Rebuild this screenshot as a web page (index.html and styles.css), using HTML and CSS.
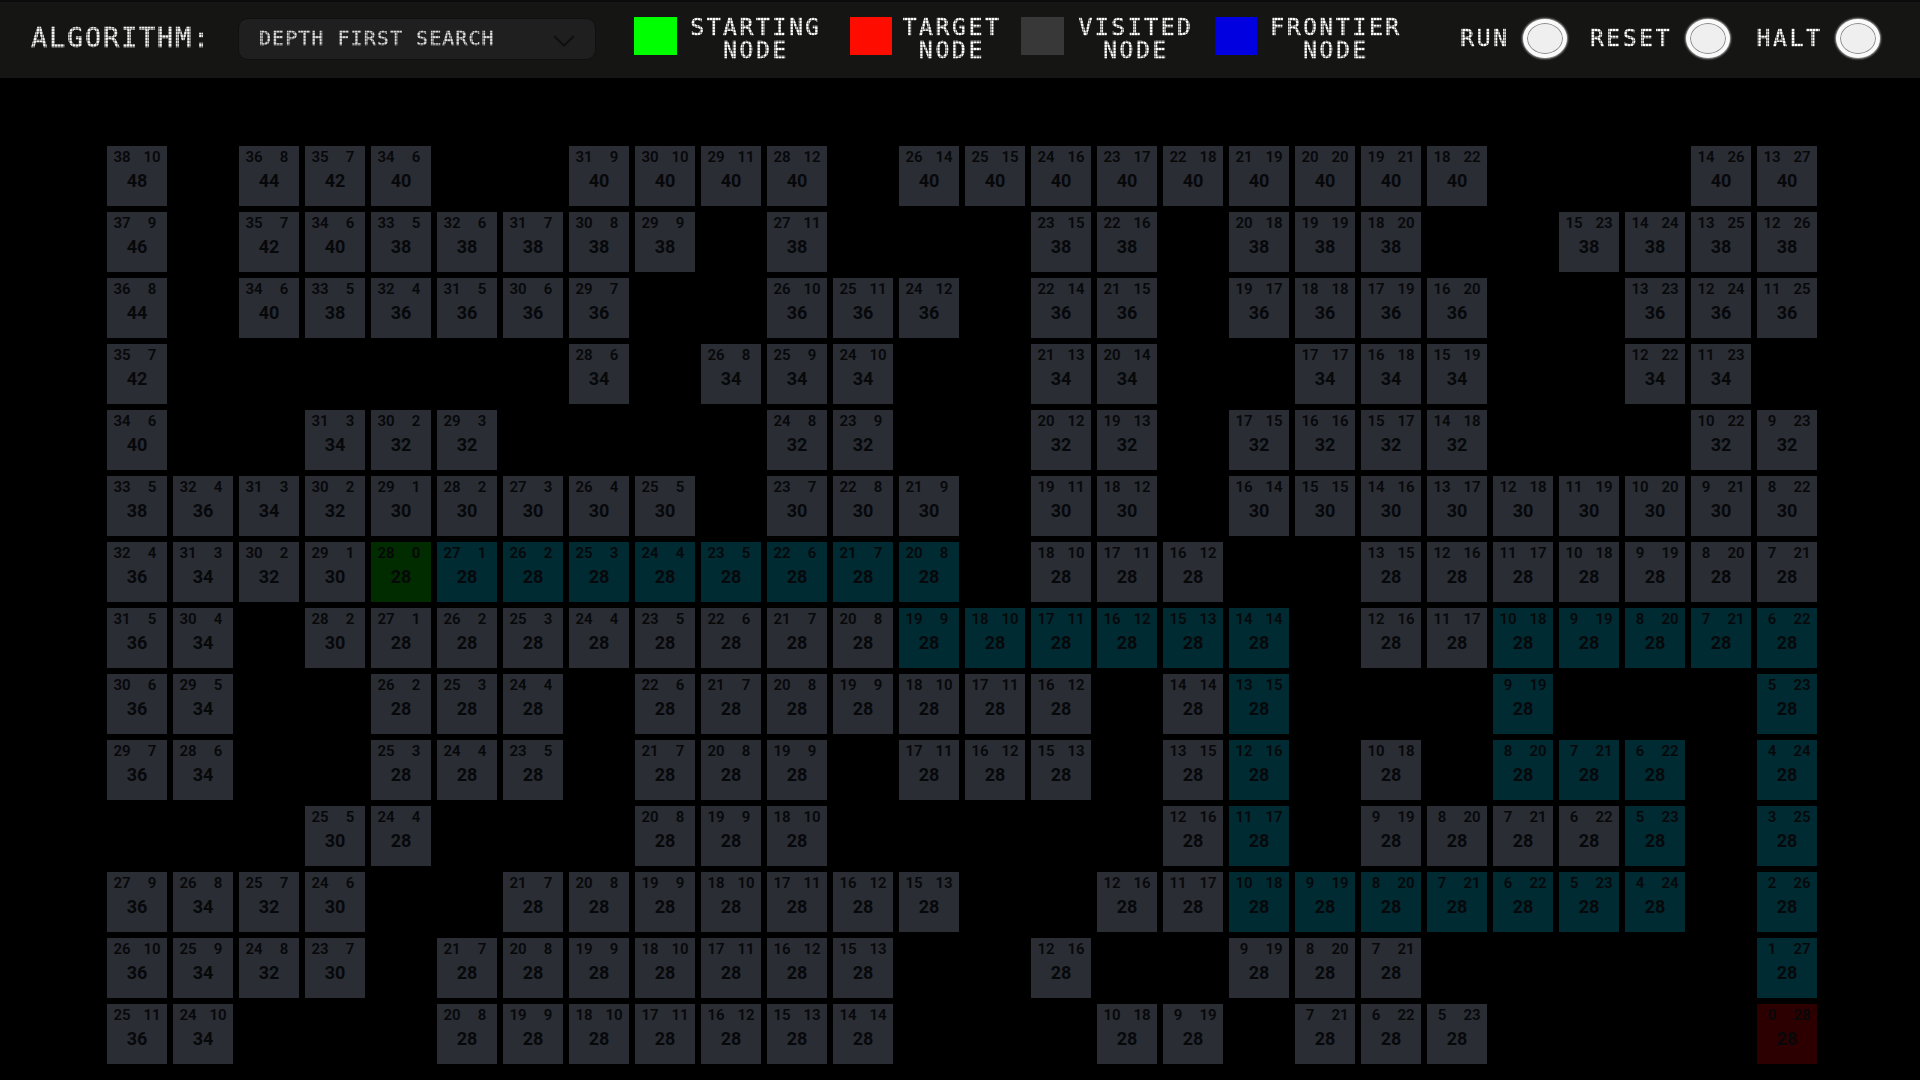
FILE: index.html
```html
<!DOCTYPE html>
<html lang="en">
<head>
<meta charset="utf-8">
<title>Pathfinding Visualizer</title>
<link rel="stylesheet" href="styles.css">
</head>
<body>
<header class="toolbar">
  <span class="title dotted">ALGORITHM:</span>
  <div class="select">
    <span class="select-text dotted">DEPTH FIRST SEARCH</span>
    <svg class="chevron" width="22" height="12" viewBox="0 0 22 12"><path d="M1 1 L11 10.5 L21 1" fill="none" stroke="#0f0f0f" stroke-width="2"/></svg>
  </div>
  <div class="legend">
    <span class="swatch swatch-start"></span>
    <span class="legend-label label-start dotted">STARTING<br>NODE</span>
    <span class="swatch swatch-target"></span>
    <span class="legend-label label-target dotted">TARGET<br>NODE</span>
    <span class="swatch swatch-visited"></span>
    <span class="legend-label label-visited dotted">VISITED<br>NODE</span>
    <span class="swatch swatch-frontier"></span>
    <span class="legend-label label-frontier dotted">FRONTIER<br>NODE</span>
  </div>
  <div class="controls">
    <span class="control-label label-run dotted">RUN</span><span class="knob knob-run"></span>
    <span class="control-label label-reset dotted">RESET</span><span class="knob knob-reset"></span>
    <span class="control-label label-halt dotted">HALT</span><span class="knob knob-halt"></span>
  </div>
</header>
<main class="board">
  <div class="grid" id="grid"></div>
</main>
<script src="app.js"></script>
</body>
</html>
```
FILE: styles.css
```css
* { box-sizing: border-box; }
html, body { margin: 0; height: 100%; background: #000; overflow: hidden; }
body { font-family: Roboto, "Liberation Sans", sans-serif; }

.toolbar {
  height: 78px;
  display: flex;
  align-items: flex-start;
  background: #151514;
  border-top: 2px solid #0b0b0b;
  padding: 0 40px 0 31px;
}
.dotted {
  font-family: "DejaVu Sans Mono", "Liberation Mono", monospace;
  color: #fff;
  -webkit-text-stroke: 0.5px currentColor;
  -webkit-mask-image: repeating-linear-gradient(90deg, #000 0 2px, rgba(0,0,0,.62) 2px 3px), repeating-linear-gradient(0deg, #000 0 2px, rgba(0,0,0,.62) 2px 3px);
  -webkit-mask-composite: source-in;
  mask-composite: intersect;
}
.title {
  width: 180px;
  margin-top: 16px;
  font-size: 27px;
  line-height: 40px;
  letter-spacing: 1.75px;
  color: #f2f2f2;
}
.select {
  width: 358px;
  height: 42px;
  margin: 16px 0 0 27px;
  padding: 0 20px 2px 20px;
  display: flex;
  align-items: center;
  justify-content: space-between;
  background: #1f1f1f;
  border: 1px solid #101010;
  border-radius: 10px;
}
.select-text { font-size: 20px; letter-spacing: 1.05px; color: #dcdcdc; white-space: pre; }
.chevron { margin-top: 6px; }

.legend { display: flex; align-items: flex-start; margin: 15px 0 0 38px; }
.swatch { width: 42px; height: 38px; flex: none; }
.swatch-start { background: #0f0; width: 43px; }
.swatch-target { background: #ff0c00; }
.swatch-visited { background: #383838; width: 43px; }
.swatch-frontier { background: #0000e0; }
.legend-label {
  font-size: 23px;
  line-height: 23px;
  letter-spacing: 2.6px;
  text-align: center;
  flex: none;
}
.label-start { width: 134px; margin: -1px 27px 0 12px; }
.label-target { width: 100px; margin: -1px 19px 0 10px; }
.label-visited { width: 116px; margin: -1px 21px 0 14px; }
.label-frontier { width: 134px; margin: -1px 0 0 12px; }

.controls { display: flex; align-items: center; margin: 17px 0 0 auto; }
.control-label { font-size: 23px; line-height: 39px; letter-spacing: 2.6px; text-align: center; }
.label-run { width: 50px; }
.label-reset { width: 84px; margin-left: 22px; }
.label-halt { width: 67px; margin-left: 26px; }
.knob {
  width: 44px;
  height: 39px;
  margin-left: 13px;
  border-radius: 50%;
  background: #efefef;
  border: 4px solid #fafafa;
  box-shadow: inset 0 0 0 1px #8a8a8a, 0 0 2px 1px rgba(255,255,255,.6);
}

.board { padding: 68px 0 0 107px; }
.grid {
  display: grid;
  grid-template-columns: repeat(26, 60px);
  grid-auto-rows: 60px;
  gap: 6px;
}
.cell {
  display: flex;
  flex-direction: column;
  color: #07080a;
  font-weight: 600;
}
.cell-visited { background: #2a2d34; }
.cell-frontier { background: #002b33; }
.cell-start { background: #002c00; }
.cell-target { background: #2c0000; }
.cell-top { display: flex; height: 21px; padding-top: 1px; font-size: 15px; line-height: 20px; }
.cell-top span { width: 30px; text-align: center; }
.cell-sum { font-size: 18px; font-weight: 700; line-height: 28px; text-align: center; }
```
FILE: app.js
```js
var rows = [
  "v.vvv..vvvv.vvvvvvvvv...vv",
  "v.vvvvvvv.v...vv.vvv..vvvv",
  "v.vvvvvv..vvv.vv.vvvv..vvv",
  "v......v.vvv..vv..vvv..vv.",
  "v..vvv....vv..vv.vvvv...vv",
  "vvvvvvvvv.vvv.vv.vvvvvvvvv",
  "vvvvsffffffff.vvv..vvvvvvv",
  "vv.vvvvvvvvvffffff.vvfffff",
  "vv..vvv.vvvvvvv.vf...f...f",
  "vv..vvv.vvv.vvv.vf.v.fff.f",
  "...vv...vvv.....vf.vvvvf.f",
  "vvvv..vvvvvvv..vvfffffff.f",
  "vvvv.vvvvvvv..v..vvv.....f",
  "vv...vvvvvvv...vv.vvv....t"
];
var kinds = { v: "cell-visited", f: "cell-frontier", s: "cell-start", t: "cell-target" };
var start = { r: 6, c: 4 };
var target = { r: 13, c: 25 };
var grid = document.getElementById("grid");

rows.forEach(function (line, r) {
  line.split("").forEach(function (ch, c) {
    var cell = document.createElement("div");
    if (ch !== ".") {
      var toTarget = Math.abs(r - target.r) + Math.abs(c - target.c);
      var fromStart = Math.abs(r - start.r) + Math.abs(c - start.c);
      cell.className = "cell " + kinds[ch];
      cell.innerHTML =
        '<div class="cell-top"><span>' + toTarget + "</span><span>" + fromStart + "</span></div>" +
        '<div class="cell-sum">' + (toTarget + fromStart) + "</div>";
    }
    grid.appendChild(cell);
  });
});
```
